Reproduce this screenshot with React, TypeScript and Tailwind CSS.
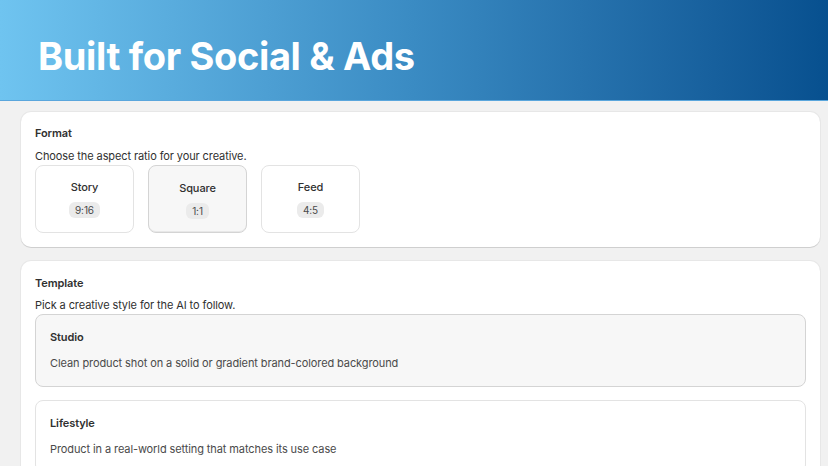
import { useState } from 'react'

interface FormatOption {
  id: string
  label: string
  ratio: string
}

interface TemplateOption {
  id: string
  title: string
  description: string
}

const formats: FormatOption[] = [
  { id: 'story', label: 'Story', ratio: '9:16' },
  { id: 'square', label: 'Square', ratio: '1:1' },
  { id: 'feed', label: 'Feed', ratio: '4:5' },
]

const templates: TemplateOption[] = [
  { id: 'studio', title: 'Studio', description: 'Clean product shot on a solid or gradient brand-colored background' },
  { id: 'lifestyle', title: 'Lifestyle', description: 'Product in a real-world setting that matches its use case' },
]

export default function App() {
  const [format, setFormat] = useState('square')
  const [template, setTemplate] = useState('studio')

  return (
    <div className="min-h-screen bg-[#f1f1f1] font-['Inter',sans-serif] text-[#303030] tracking-[-0.1px]">
      {/* Hero banner */}
      <div className="h-[101px] flex items-center px-[38px] bg-gradient-to-r from-[#6fc4f0] via-[#3a8bc3] to-[#07508f] border-b border-[#5aa6dc]">
        <h1 className="text-[38px] font-bold tracking-[-0.35px] text-white leading-none pt-[11px]">
          Built for Social &amp; Ads
        </h1>
      </div>

      <div className="px-[21px] pt-[11px] pr-[8px] flex flex-col gap-[14px]">
        {/* Format */}
        <section className="bg-white rounded-[10px] shadow-[0_1px_0_rgba(0,0,0,0.1),0_0_0_1px_rgba(0,0,0,0.04)] px-[14px] pt-[14px] pb-[14px]">
          <h2 className="text-[11px] font-semibold leading-[14px]">Format</h2>
          <p className="text-[11px] leading-[14px] mt-[9px]">Choose the aspect ratio for your creative.</p>
          <div className="flex gap-[14px] mt-[2px]">
            {formats.map((f) => {
              const active = format === f.id
              return (
                <button
                  key={f.id}
                  onClick={() => setFormat(f.id)}
                  className={`w-[99px] h-[68px] rounded-[8px] border flex flex-col items-center justify-center gap-[8px] ${
                    active ? 'bg-[#f7f7f7] border-[#d4d4d4] shadow-[inset_0_-1px_0_rgba(0,0,0,0.06)]' : 'bg-white border-[#e3e3e3]'
                  }`}
                >
                  <span className={`text-[11px] font-medium leading-[14px] ${active ? 'mt-[2px]' : ''}`}>{f.label}</span>
                  <span className="text-[10px] leading-[16px] px-[6px] rounded-[6px] bg-[#ebebeb] text-[#4a4a4a]">{f.ratio}</span>
                </button>
              )
            })}
          </div>
        </section>

        {/* Template */}
        <section className="bg-white rounded-[10px] shadow-[0_1px_0_rgba(0,0,0,0.1),0_0_0_1px_rgba(0,0,0,0.04)] px-[14px] pt-[15px] pb-[14px]">
          <h2 className="text-[11px] font-semibold leading-[14px]">Template</h2>
          <p className="text-[11px] leading-[14px] mt-[8px]">Pick a creative style for the AI to follow.</p>
          <div className="flex flex-col gap-[13px] mt-[2px]">
            {templates.map((t) => {
              const active = template === t.id
              return (
                <button
                  key={t.id}
                  onClick={() => setTemplate(t.id)}
                  className={`text-left rounded-[8px] border px-[14px] pt-[15px] pb-[16px] ${
                    active ? 'bg-[#f7f7f7] border-[#d4d4d4]' : 'bg-white border-[#e3e3e3]'
                  }`}
                >
                  <div className="text-[11px] font-semibold leading-[14px]">{t.title}</div>
                  <div className="text-[11px] leading-[14px] mt-[12px] text-[#4a4a4a]">{t.description}</div>
                </button>
              )
            })}
          </div>
        </section>
      </div>
    </div>
  )
}
